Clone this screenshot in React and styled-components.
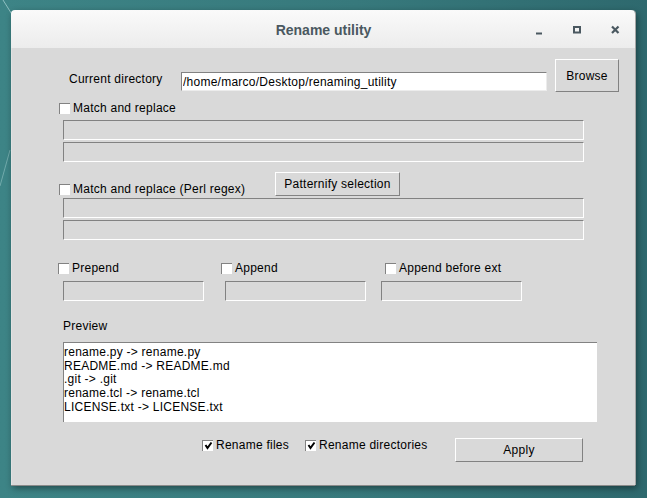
import React from 'react';
import styled, { createGlobalStyle } from 'styled-components';

const GlobalStyle = createGlobalStyle`
  html, body { margin: 0; padding: 0; }
  body {
    width: 647px;
    height: 498px;
    overflow: hidden;
    font-family: "Liberation Sans", Arial, sans-serif;
  }
`;

const previewLines = [
    'rename.py -> rename.py',
    'README.md -> README.md',
    '.git -> .git',
    'rename.tcl -> rename.tcl',
    'LICENSE.txt -> LICENSE.txt',
];

const affixes = [
    { label: 'Prepend', box: 0, entry: 5 },
    { label: 'Append', box: 0, entry: 4 },
    { label: 'Append before ext', box: 4, entry: 0 },
];

function CheckBox({ checked }) {
    return (
        <Box>
            {checked && (
                <svg width="9" height="9" viewBox="0 0 9 9">
                    <polyline points="1.5,4 3.5,7 7.5,1.5" fill="none" stroke="#000" strokeWidth="2" />
                </svg>
            )}
        </Box>
    );
}

function Check({ label, checked, width, ml }) {
    return (
        <CheckLabel $w={width} $ml={ml}>
            <CheckBox checked={checked} />
            <span>{label}</span>
        </CheckLabel>
    );
}

function App() {
    return (
        <Desktop>
            <GlobalStyle />
            <Wallpaper width="647" height="498">
                <line x1="3" y1="0" x2="13" y2="16" stroke="rgba(210,240,240,0.55)" strokeWidth="1" />
                <line x1="0" y1="186" x2="10" y2="150" stroke="rgba(210,240,240,0.35)" strokeWidth="1" />
            </Wallpaper>
            <Window>
                <TitleBar>
                    <span />
                    <Title>Rename utility</Title>
                    <Controls>
                        <Control>
                            <svg width="10" height="10" viewBox="0 0 10 10">
                                <rect x="2" y="7.5" width="6" height="2" fill="#4a5860" />
                            </svg>
                        </Control>
                        <Control>
                            <svg width="10" height="10" viewBox="0 0 10 10">
                                <rect x="2" y="2" width="6" height="5.5" fill="none" stroke="#4a5860" strokeWidth="2" />
                            </svg>
                        </Control>
                        <Control>
                            <svg width="10" height="10" viewBox="0 0 10 10">
                                <path d="M2 1.5 L8.5 8 M8.5 1.5 L2 8" stroke="#4a5860" strokeWidth="2.2" />
                            </svg>
                        </Control>
                    </Controls>
                </TitleBar>

                <Body>
                    <Row>
                        <Label $w={112} $ml={11} $mt={13}>Current directory</Label>
                        <Entry $white $w={366} $h={19} $mt={13} $ml={0} readOnly value="/home/marco/Desktop/renaming_utility" />
                        <Button $w={64} $h={33} $ml={8}>Browse</Button>
                    </Row>

                    <Row $mt={9}>
                        <Check label="Match and replace" ml={1} />
                    </Row>
                    <Stack $mt={5}>
                        <Entry $w={521} readOnly />
                        <Entry $w={521} readOnly />
                    </Stack>

                    <Row $mt={10} $align="flex-end">
                        <Check label="Match and replace (Perl regex)" ml={1} width={216} />
                        <Button $w={125} $h={24}>Patternify selection</Button>
                    </Row>
                    <Stack $mt={2}>
                        <Entry $w={521} readOnly />
                        <Entry $w={521} readOnly />
                    </Stack>

                    <Affixes>
                        {affixes.map((a) => (
                            <AffixCol key={a.label}>
                                <Check label={a.label} ml={a.box} />
                                <Entry $w={141} $ml={a.entry} $mt={6} readOnly />
                            </AffixCol>
                        ))}
                    </Affixes>

                    <Label $ml={5} $mt={18}>Preview</Label>
                    <PreviewBox>
                        {previewLines.map((line) => (
                            <div key={line}>{line}</div>
                        ))}
                    </PreviewBox>

                    <Row $mt={16}>
                        <Check label="Rename files" checked ml={144} width={103} />
                        <Check label="Rename directories" checked width={150} />
                        <Button $w={128} $h={24}>Apply</Button>
                    </Row>
                </Body>
            </Window>
        </Desktop>
    );
}

const Desktop = styled.div`
    position: relative;
    width: 647px;
    height: 498px;
    box-sizing: border-box;
    padding: 10px 0 0 11px;
    background: linear-gradient(to right, #3d8486 0%, #37797c 55%, #2e696e 100%);
`;

const Wallpaper = styled.svg`
    position: absolute;
    left: 0;
    top: 0;
    pointer-events: none;
`;

const Window = styled.div`
    position: relative;
    width: 624px;
    height: 475px;
    display: flex;
    flex-direction: column;
    border-radius: 4px 4px 0 0;
    overflow: hidden;
    box-shadow: 0 1px 0 #8a8a8a, 1px 0 0 #a6a6a6, 2px 3px 7px rgba(0, 0, 0, 0.45);
`;

const TitleBar = styled.div`
    height: 38px;
    flex: none;
    display: grid;
    grid-template-columns: 1fr auto 1fr;
    align-items: center;
    background: linear-gradient(#fafafa, #ececec);
`;

const Title = styled.div`
    font-family: "Liberation Sans", Arial, sans-serif;
    font-weight: 700;
    font-size: 14px;
    color: #4a5860;
    padding-left: 1px;
    margin-top: 1px;
`;

const Controls = styled.div`
    justify-self: end;
    display: flex;
    padding-right: 1px;
    margin-top: 1px;
`;

const Control = styled.div`
    width: 38px;
    display: flex;
    justify-content: center;
    align-items: center;
`;

const Body = styled.div`
    flex: 1;
    background: #d9d9d9;
    padding: 11px 0 0 46px;
    border-left: 1px solid #e2e2e2;
    box-sizing: border-box;
    display: flex;
    flex-direction: column;
    align-items: flex-start;
    font-size: 12px;
    letter-spacing: 0.25px;
    color: #000;
`;

const Row = styled.div`
    display: flex;
    align-items: ${(p) => p.$align || 'flex-start'};
    margin-top: ${(p) => p.$mt || 0}px;
`;

const Stack = styled.div`
    display: flex;
    flex-direction: column;
    gap: 2px;
    margin-top: ${(p) => p.$mt || 0}px;
`;

const Label = styled.div`
    font-size: 12px;
    line-height: 14px;
    white-space: nowrap;
    width: ${(p) => (p.$w ? `${p.$w}px` : 'auto')};
    margin-left: ${(p) => p.$ml || 0}px;
    margin-top: ${(p) => p.$mt || 0}px;
`;

const Entry = styled.input`
    display: block;
    box-sizing: border-box;
    width: ${(p) => p.$w}px;
    height: ${(p) => p.$h || 20}px;
    margin: ${(p) => p.$mt || 0}px 0 0 ${(p) => p.$ml ?? 5}px;
    padding: 0 0 0 1px;
    font-family: "Liberation Sans", Arial, sans-serif;
    font-size: 12px;
    letter-spacing: 0.25px;
    color: #000;
    background: ${(p) => (p.$white ? '#ffffff' : '#d9d9d9')};
    border: 1px solid;
    border-color: #828282 ${(p) => (p.$white ? '#ececec' : '#ffffff')} ${(p) => (p.$white ? '#ececec' : '#ffffff')} #828282;
    outline: none;
`;

const Button = styled.button`
    box-sizing: border-box;
    width: ${(p) => p.$w}px;
    height: ${(p) => p.$h}px;
    margin-left: ${(p) => p.$ml || 0}px;
    padding: 0;
    font-family: "Liberation Sans", Arial, sans-serif;
    font-size: 12px;
    letter-spacing: 0.25px;
    color: #000;
    background: #d9d9d9;
    border: 1px solid;
    border-color: #ffffff #828282 #828282 #ffffff;
    border-radius: 0;
`;

const CheckLabel = styled.label`
    display: flex;
    align-items: center;
    gap: 3px;
    height: 14px;
    line-height: 14px;
    font-size: 12px;
    white-space: nowrap;
    width: ${(p) => (p.$w ? `${p.$w}px` : 'auto')};
    margin-left: ${(p) => p.$ml || 0}px;
    margin-top: ${(p) => p.$mt || 0}px;
`;

const Box = styled.span`
    box-sizing: border-box;
    width: 11px;
    height: 11px;
    flex: none;
    background: #ffffff;
    border-top: 1px solid #828282;
    border-left: 1px solid #828282;
    display: flex;
    align-items: center;
    justify-content: center;
`;

const Affixes = styled.div`
    display: grid;
    grid-template-columns: 163px 160px 160px;
    margin-top: 21px;
`;

const AffixCol = styled.div`
    display: flex;
    flex-direction: column;
    align-items: flex-start;
`;

const PreviewBox = styled.div`
    box-sizing: border-box;
    width: 534px;
    height: 80px;
    margin: 9px 0 0 5px;
    padding: 3px 0 0 0;
    background: #ffffff;
    border-top: 1px solid #828282;
    border-left: 1px solid #828282;
    font-size: 12px;
    line-height: 13.7px;
`;

export default App;
